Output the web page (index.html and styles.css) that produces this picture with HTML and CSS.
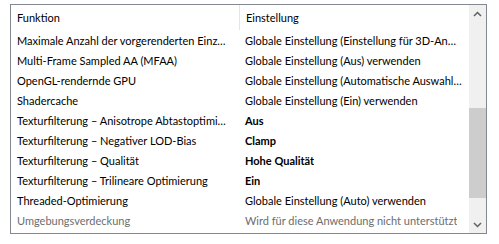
FILE: index.html
```html
<html>
  <head>
    <meta charset="UTF-8">
    <title>Einstellungen</title>
    <link rel="stylesheet" href="styles.css">
  </head>
  <body>
    <div class="list">
      <div class="list-main">
        <div class="head">
          <div class="col1 head-cell">Funktion</div>
          <div class="col2">Einstellung</div>
        </div>
        <div class="row"><div class="col1">Maximale Anzahl der vorgerenderten Einz…</div><div class="col2">Globale Einstellung (Einstellung für 3D-An…</div></div>
        <div class="row"><div class="col1">Multi-Frame Sampled AA (MFAA)</div><div class="col2">Globale Einstellung (Aus) verwenden</div></div>
        <div class="row"><div class="col1">OpenGL-rendernde GPU</div><div class="col2">Globale Einstellung (Automatische Auswahl…</div></div>
        <div class="row"><div class="col1">Shadercache</div><div class="col2">Globale Einstellung (Ein) verwenden</div></div>
        <div class="row"><div class="col1">Texturfilterung – Anisotrope Abtastoptimi…</div><div class="col2 bold">Aus</div></div>
        <div class="row"><div class="col1">Texturfilterung – Negativer LOD-Bias</div><div class="col2 bold">Clamp</div></div>
        <div class="row"><div class="col1">Texturfilterung – Qualität</div><div class="col2 bold">Hohe Qualität</div></div>
        <div class="row"><div class="col1">Texturfilterung – Trilineare Optimierung</div><div class="col2 bold">Ein</div></div>
        <div class="row"><div class="col1">Threaded-Optimierung</div><div class="col2">Globale Einstellung (Auto) verwenden</div></div>
        <div class="row disabled"><div class="col1">Umgebungsverdeckung</div><div class="col2">Wird für diese Anwendung nicht unterstützt</div></div>
      </div>
      <div class="scrollbar">
        <div class="arrow">
          <svg width="9" height="6" viewBox="0 0 9 6"><path d="M1 5 L4.5 1.5 L8 5" fill="none" stroke="#606060" stroke-width="1.5"/></svg>
        </div>
        <div class="track">
          <div class="thumb"></div>
        </div>
        <div class="arrow">
          <svg width="9" height="6" viewBox="0 0 9 6"><path d="M1 1 L4.5 4.5 L8 1" fill="none" stroke="#606060" stroke-width="1.5"/></svg>
        </div>
      </div>
    </div>
  </body>
</html>
```

FILE: styles.css
```css
body {
  margin: 0;
  padding: 4px 0 0 10px;
  background: #ffffff;
  font-family: Lato, "Noto Sans", sans-serif;
  font-size: 11px;
  color: #000000;
}
.list {
  display: flex;
  width: 475px;
  height: 228px;
  border: 1px solid #828790;
  background: #ffffff;
}
.list-main {
  flex: 1;
  overflow: hidden;
}
.head {
  display: flex;
  height: 25px;
  align-items: center;
}
.head-cell {
  align-self: stretch;
  display: flex;
  align-items: center;
  border-right: 1px solid #e5e5e5;
}
.row {
  display: flex;
  height: 20px;
  align-items: center;
}
.col1 {
  flex-shrink: 0;
  width: 222px;
  padding-left: 6px;
  white-space: nowrap;
  overflow: hidden;
}
.col2 {
  padding-left: 6px;
  white-space: nowrap;
  overflow: hidden;
}
.bold {
  font-weight: bold;
}
.disabled {
  color: #6d6d6d;
}
.scrollbar {
  width: 17px;
  display: flex;
  flex-direction: column;
  background: #f0f0f0;
}
.arrow {
  height: 17px;
  display: flex;
  align-items: center;
  justify-content: center;
}
.track {
  flex: 1;
  padding-top: 86px;
}
.thumb {
  height: 90px;
  background: #cdcdcd;
}
```
